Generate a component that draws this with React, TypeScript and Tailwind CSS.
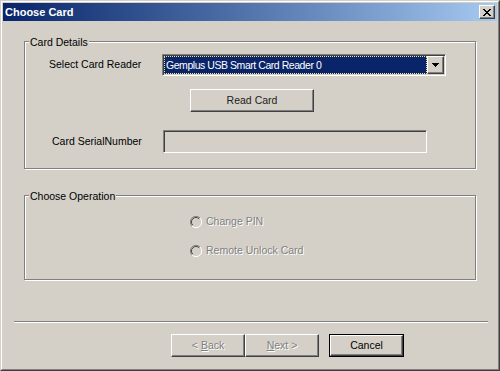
import React from 'react';

const raised =
  'border border-t-white border-l-white border-r-[#404040] border-b-[#404040] shadow-[inset_-1px_-1px_0_#808080]';
const sunken =
  'border border-t-[#808080] border-l-[#808080] border-r-white border-b-white shadow-[inset_1px_1px_0_#404040,inset_-1px_-1px_0_#d4d0c8]';
const etched =
  'relative border border-[#808080] shadow-[inset_1px_1px_0_#fff,1px_1px_0_#fff]';
const disabledText = 'text-[#808080] [text-shadow:1px_1px_0_#fff]';

function GroupBox({ label, className, children }: { label: string; className: string; children: React.ReactNode }) {
  return (
    <div className={`${etched} ${className}`}>
      {/* caption sits on the top line */}
      <span className="absolute -top-[7px] left-[4px] px-[1px] bg-[#d4d0c8] leading-[14px]">{label}</span>
      {children}
    </div>
  );
}

function Radio({ label }: { label: string }) {
  return (
    <div className="flex items-center h-[16px]">
      <svg width="12" height="12" viewBox="0 0 12 12" className="shrink-0">
        <path d="M10 2 A5.5 5.5 0 1 0 2 10" fill="none" stroke="#808080" strokeWidth="1" />
        <path d="M9.2 2.8 A4.5 4.5 0 1 0 2.8 9.2" fill="none" stroke="#404040" strokeWidth="1" />
        <path d="M2 10 A5.5 5.5 0 0 0 10 2" fill="none" stroke="#fff" strokeWidth="1" />
        <circle cx="6" cy="6" r="3.6" fill="#d4d0c8" />
      </svg>
      <span className={`ml-[4px] ${disabledText}`}>{label}</span>
    </div>
  );
}

function WizardButton({ children, disabled, isDefault }: { children: React.ReactNode; disabled?: boolean; isDefault?: boolean }) {
  if (isDefault) {
    return (
      <div className="border border-black w-[75px] h-[23px]">
        <div className={`h-full ${raised} flex items-center justify-center text-black`}>{children}</div>
      </div>
    );
  }
  return (
    <div className={`w-[74px] h-[23px] ${raised} flex items-center justify-center ${disabled ? disabledText : 'text-black'}`}>
      {children}
    </div>
  );
}

export default function App() {
  return (
    <div className="w-[500px] h-[371px] bg-[#d4d0c8] border border-t-[#d4d0c8] border-l-[#d4d0c8] border-r-[#404040] border-b-[#404040] font-['Liberation_Sans',Arial,sans-serif] text-[10.5px] text-black select-none">
      <div className="h-full border border-t-white border-l-white border-r-[#808080] border-b-[#808080] p-[1px] flex flex-col">
        {/* title bar */}
        <div className="h-[18px] shrink-0 flex items-center justify-between bg-gradient-to-r from-[#0a246a] to-[#a6caf0] pl-[2px] pr-[2px]">
          <span className="text-white font-bold text-[11px] leading-none">Choose Card</span>
          <div className={`w-[16px] h-[14px] ${raised} bg-[#d4d0c8] flex items-center justify-center`}>
            <svg width="8" height="7" viewBox="0 0 8 7" shapeRendering="crispEdges">
              <path d="M0 0h2v1h1v1h2V1h1V0h2v1H7v1H6v1H5v1h1v1h1v1h1v1H6V6H5V5H3v1H2v1H0V6h1V5h1V4h1V3H2V2H1V1H0z" fill="#000" />
            </svg>
          </div>
        </div>

        {/* card details */}
        <GroupBox label="Card Details" className="mt-[20px] ml-[21px] w-[452px] h-[128px] shrink-0">
          <div className="flex items-center mt-[12px] pl-[24px]">
            <span className="w-[113px] shrink-0">Select Card Reader</span>
            <div className={`w-[284px] h-[22px] ${sunken} bg-white flex p-[1px]`}>
              <div className="flex-1 bg-[#0a246a] text-white border border-dotted border-[#f5e08a] flex items-center pl-[1px] leading-none tracking-[-0.45px]">
                Gemplus USB Smart Card Reader 0
              </div>
              <div className={`w-[17px] h-full ${raised} bg-[#d4d0c8] flex items-center justify-center`}>
                <svg width="7" height="4" viewBox="0 0 7 4" shapeRendering="crispEdges">
                  <path d="M0 0h7v1H6v1H5v1H4v1H3V3H2V2H1V1H0z" fill="#000" />
                </svg>
              </div>
            </div>
          </div>
          <div className={`mt-[13px] ml-[165px] w-[124px] h-[23px] ${raised} flex items-center justify-center text-[#222]`}>Read Card</div>
          <div className="flex items-center mt-[18px] pl-[27px]">
            <span className="w-[111px] shrink-0">Card SerialNumber</span>
            <div className={`w-[264px] h-[23px] ${sunken} bg-[#d4d0c8]`} />
          </div>
        </GroupBox>

        {/* operation */}
        <GroupBox label="Choose Operation" className="mt-[26px] ml-[21px] w-[452px] h-[85px] shrink-0">
          <div className="pl-[165px] pt-[18px] flex flex-col gap-[13px]">
            <Radio label="Change PIN" />
            <Radio label="Remote Unlock Card" />
          </div>
        </GroupBox>

        {/* separator */}
        <div className="mt-[41px] ml-[11px] w-[474px] h-[2px] border-t border-t-[#808080] border-b border-b-white shrink-0" />

        <div className="flex mt-[11px] ml-[168px]">
          <WizardButton disabled>
            &lt; <span className="underline ml-[3px]">B</span>ack
          </WizardButton>
          <WizardButton disabled>
            <span className="underline">N</span>ext &gt;
          </WizardButton>
          <div className="ml-[10px]">
            <WizardButton isDefault>Cancel</WizardButton>
          </div>
        </div>
      </div>
    </div>
  );
}
